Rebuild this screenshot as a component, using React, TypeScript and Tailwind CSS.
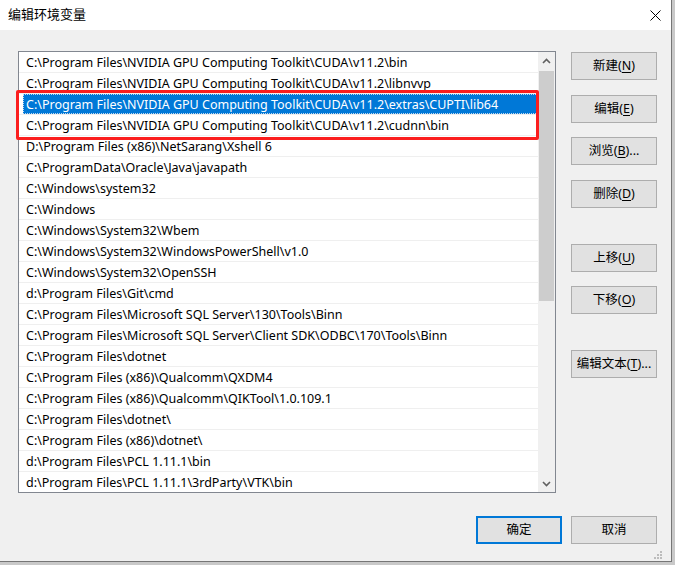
import React from "react";

const rows = [
  "C:\\Program Files\\NVIDIA GPU Computing Toolkit\\CUDA\\v11.2\\bin",
  "C:\\Program Files\\NVIDIA GPU Computing Toolkit\\CUDA\\v11.2\\libnvvp",
  "C:\\Program Files\\NVIDIA GPU Computing Toolkit\\CUDA\\v11.2\\extras\\CUPTI\\lib64",
  "C:\\Program Files\\NVIDIA GPU Computing Toolkit\\CUDA\\v11.2\\cudnn\\bin",
  "D:\\Program Files (x86)\\NetSarang\\Xshell 6",
  "C:\\ProgramData\\Oracle\\Java\\javapath",
  "C:\\Windows\\system32",
  "C:\\Windows",
  "C:\\Windows\\System32\\Wbem",
  "C:\\Windows\\System32\\WindowsPowerShell\\v1.0",
  "C:\\Windows\\System32\\OpenSSH",
  "d:\\Program Files\\Git\\cmd",
  "C:\\Program Files\\Microsoft SQL Server\\130\\Tools\\Binn",
  "C:\\Program Files\\Microsoft SQL Server\\Client SDK\\ODBC\\170\\Tools\\Binn",
  "C:\\Program Files\\dotnet",
  "C:\\Program Files (x86)\\Qualcomm\\QXDM4",
  "C:\\Program Files (x86)\\Qualcomm\\QIKTool\\1.0.109.1",
  "C:\\Program Files\\dotnet\\",
  "C:\\Program Files (x86)\\dotnet\\",
  "d:\\Program Files\\PCL 1.11.1\\bin",
  "d:\\Program Files\\PCL 1.11.1\\3rdParty\\VTK\\bin",
];

const font = { fontFamily: '"Noto Sans", "Noto Sans CJK SC", sans-serif' };

function Btn({ label, k, suffix = "", mt }: { label: string; k: string; suffix?: string; mt: string }) {
  return (
    <div
      className={`${mt} flex h-[28px] w-[86px] items-center justify-center border border-[#adadad] bg-[#e1e1e1] text-[12.5px] text-black`}
    >
      <span>
        {label}(<span className="underline underline-offset-2">{k}</span>){suffix}
      </span>
    </div>
  );
}

export default function App() {
  return (
    <div className="h-[565px] w-[675px] overflow-hidden bg-[#c9c9c9]" style={font}>
      <div className="flex h-[562px] w-[672px] flex-col border-b border-r border-[#767676] bg-[#f0f0f0]">
        {/* title bar */}
        <div className="flex h-[30px] shrink-0 items-center justify-between bg-white pl-[8px] pr-[10px]">
          <span className="text-[13px] text-black">编辑环境变量</span>
          <svg width="11" height="11" viewBox="0 0 11 11">
            <path d="M0.5 0.5 L10.5 10.5 M10.5 0.5 L0.5 10.5" stroke="#000" strokeWidth="1" />
          </svg>
        </div>
        {/* body */}
        <div className="flex flex-col pl-[18px] pt-[21px]">
          <div className="flex">
            {/* list box */}
            <div className="relative flex h-[442px] w-[538px] border border-[#828790] bg-white">
              <div className="flex flex-1 flex-col overflow-hidden">
                {rows.map((r, i) => {
                  const sel = i === 2;
                  return (
                    <div
                      key={i}
                      className="flex h-[21px] shrink-0 items-stretch border-b border-[#efefef]"
                    >
                      <div
                        className={`ml-[4px] flex flex-1 items-center pl-[3px] pt-[2px] text-[12.5px] leading-none whitespace-nowrap ${
                          sel ? "bg-[#0078d7] text-white outline-1 outline-dotted outline-[#c0d8f0] -outline-offset-1" : "text-black"
                        }`}
                      >
                        {r}
                      </div>
                    </div>
                  );
                })}
              </div>
              {/* scrollbar */}
              <div className="flex w-[17px] shrink-0 flex-col bg-[#f0f0f0]">
                <div className="flex h-[17px] items-center justify-center">
                  <svg width="9" height="6" viewBox="0 0 9 6">
                    <path d="M1 5 L4.5 1.5 L8 5" fill="none" stroke="#606060" strokeWidth="1.6" />
                  </svg>
                </div>
                <div className="mx-[1px] mt-[2px] h-[230px] bg-[#cdcdcd]" />
                <div className="flex-1" />
                <div className="flex h-[17px] items-center justify-center">
                  <svg width="9" height="6" viewBox="0 0 9 6">
                    <path d="M1 1 L4.5 4.5 L8 1" fill="none" stroke="#606060" strokeWidth="1.6" />
                  </svg>
                </div>
              </div>
              {/* red annotation box */}
              <div className="absolute left-[-3px] top-[38px] h-[50px] w-[523px] rounded-[2px] border-[3px] border-[#fb1e1e]" />
            </div>
            {/* right buttons */}
            <div className="ml-[15px] flex flex-col">
              <Btn label="新建" k="N" mt="mt-[1px]" />
              <Btn label="编辑" k="E" mt="mt-[15px]" />
              <Btn label="浏览" k="B" suffix="..." mt="mt-[14px]" />
              <Btn label="删除" k="D" mt="mt-[15px]" />
              <Btn label="上移" k="U" mt="mt-[36px]" />
              <Btn label="下移" k="O" mt="mt-[14px]" />
              <Btn label="编辑文本" k="T" suffix="..." mt="mt-[36px]" />
            </div>
          </div>
          {/* bottom buttons */}
          <div className="ml-[458px] mt-[23px] flex gap-[9px]">
            <div className="flex h-[28px] w-[86px] items-center justify-center border-2 border-[#0078d7] bg-[#e1e1e1] text-[12.5px] text-black">
              确定
            </div>
            <div className="flex h-[28px] w-[86px] items-center justify-center border border-[#adadad] bg-[#e1e1e1] text-[12.5px] text-black">
              取消
            </div>
          </div>
          <div className="mr-[8px] mt-[7px] flex justify-end">
            <svg width="9" height="9" viewBox="0 0 9 9">
              <rect x="6" y="0" width="2" height="2" fill="#bcbcbc" />
              <rect x="3" y="3" width="2" height="2" fill="#bcbcbc" />
              <rect x="6" y="3" width="2" height="2" fill="#bcbcbc" />
              <rect x="0" y="6" width="2" height="2" fill="#bcbcbc" />
              <rect x="3" y="6" width="2" height="2" fill="#bcbcbc" />
              <rect x="6" y="6" width="2" height="2" fill="#bcbcbc" />
            </svg>
          </div>
        </div>
      </div>
    </div>
  );
}
